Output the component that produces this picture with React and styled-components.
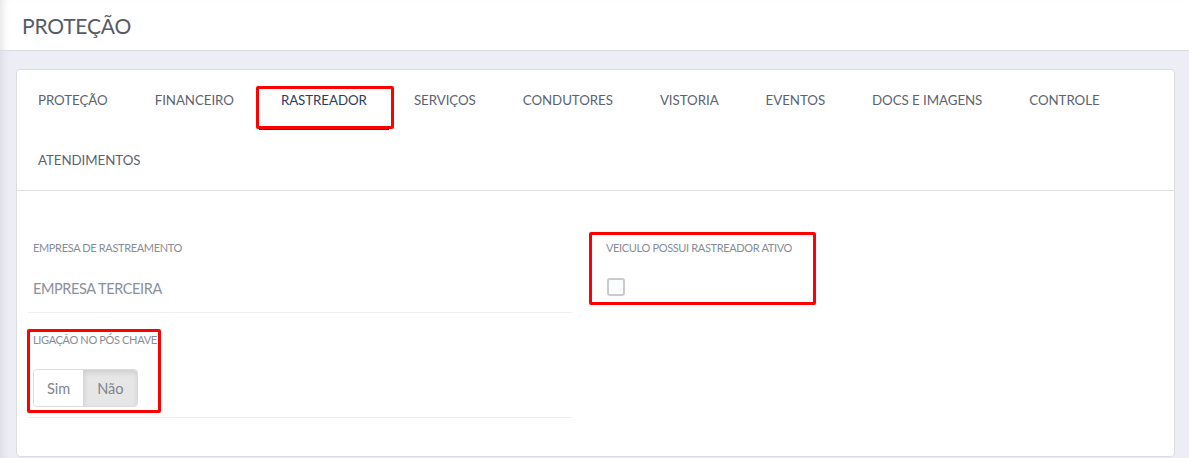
import styled, { createGlobalStyle } from "styled-components"

const GlobalStyle = createGlobalStyle`
  html, body {
    margin: 0;
    padding: 0;
    background: #ecedf5;
  }
  body {
    font-family: Lato, "Liberation Sans", sans-serif;
  }
`

const tabs = [
  "PROTEÇÃO",
  "FINANCEIRO",
  "RASTREADOR",
  "SERVIÇOS",
  "CONDUTORES",
  "VISTORIA",
  "EVENTOS",
  "DOCS E IMAGENS",
  "CONTROLE",
  "ATENDIMENTOS",
]

export default function App() {
  return (
    <>
      <GlobalStyle />
      <Page>
        <Header>
          <Title>PROTEÇÃO</Title>
        </Header>
        <Main>
          <Card>
            <TabBar>
              {tabs.map((t) => (
                <Tab key={t} active={t === "RASTREADOR"}>
                  {t}
                  {t === "RASTREADOR" && (
                    <Mark style={{ left: -3, top: 16, width: 138, height: 43 }} />
                  )}
                </Tab>
              ))}
            </TabBar>

            <Body>
              <Column>
                <Field>
                  <Label>EMPRESA DE RASTREAMENTO</Label>
                  <Value>EMPRESA TERCEIRA</Value>
                </Field>
                <Field compact>
                  <Group>
                    <Label tight>LIGAÇÃO NO PÓS CHAVE</Label>
                    <Toggle>
                      <ToggleButton>Sim</ToggleButton>
                      <ToggleButton selected>Não</ToggleButton>
                    </Toggle>
                    <Mark style={{ left: -6, top: -4, width: 134, height: 84 }} />
                  </Group>
                </Field>
              </Column>

              <Column>
                <Field plain>
                  <Group>
                    <Label>VEICULO POSSUI RASTREADOR ATIVO</Label>
                    <CheckBox />
                    <Mark style={{ left: -17, top: -9, width: 227, height: 73 }} />
                  </Group>
                </Field>
              </Column>
            </Body>
          </Card>
        </Main>
      </Page>
    </>
  )
}

const Page = styled.div`
  min-height: 458px;
  display: flex;
  flex-direction: column;
`

const Header = styled.div`
  height: 50px;
  background: #fff;
  border-bottom: 1px solid #dcdde3;
  display: flex;
  align-items: center;
  padding-left: 22px;
  box-shadow: inset 8px 0 8px -6px rgba(0, 0, 0, 0.12);
`

const Title = styled.h1`
  margin: 0;
  font-size: 21px;
  font-weight: 400;
  color: #555b66;
  letter-spacing: -0.2px;
`

const Main = styled.div`
  flex: 1;
  padding: 18px 14px 0 16px;
  box-shadow: inset 8px 0 8px -6px rgba(0, 0, 0, 0.08);
`

const Card = styled.div`
  background: #fff;
  border: 1px solid #dcdde3;
  border-radius: 4px;
`

const TabBar = styled.div`
  display: flex;
  flex-wrap: wrap;
  column-gap: 3px;
  margin-left: -1px;
  border-bottom: 1px solid #dedfe3;
`

const Tab = styled.div`
  position: relative;
  height: 60px;
  box-sizing: border-box;
  padding: 2px 22px 0;
  display: flex;
  align-items: center;
  font-size: 13.3px;
  letter-spacing: -0.05px;
  color: ${(p) => (p.active ? "#2c3c5c" : "#5b6372")};
  border-bottom: 2px solid ${(p) => (p.active ? "#1d3670" : "transparent")};
`

const Mark = styled.span`
  position: absolute;
  box-sizing: border-box;
  border: 3px solid #ff0000;
  border-radius: 2px;
  pointer-events: none;
`

const Body = styled.div`
  display: grid;
  grid-template-columns: 544px 544px;
  column-gap: 29px;
  padding: 50px 11px 38px;
`

const Column = styled.div`
  display: flex;
  flex-direction: column;
`

const Field = styled.div`
  padding: ${(p) => (p.compact ? "20px 5px 8px" : "0 5px 13px")};
  border-bottom: 1px solid ${(p) => (p.plain ? "transparent" : "#eeeef0")};
`

const Group = styled.div`
  position: relative;
  display: flex;
  flex-direction: column;
  align-items: flex-start;
`

const Label = styled.div`
  font-size: 11px;
  line-height: 14px;
  letter-spacing: -0.35px;
  color: #878d98;
  margin-bottom: ${(p) => (p.tight ? "22px" : "24px")};
`

const Value = styled.div`
  font-size: 14.5px;
  line-height: 20px;
  letter-spacing: -0.4px;
  color: #8a909a;
  margin-top: 1px;
`

const Toggle = styled.div`
  display: flex;
  border: 1px solid #dcdcdc;
  border-radius: 4px;
  overflow: hidden;
  margin-bottom: 2px;
`

const ToggleButton = styled.div`
  height: 36px;
  padding: 0 13px;
  display: flex;
  align-items: center;
  font-size: 14.5px;
  color: #80848b;
  background: ${(p) => (p.selected ? "#e6e6e6" : "#fff")};
  box-shadow: ${(p) => (p.selected ? "inset 0 3px 5px rgba(0, 0, 0, 0.1)" : "none")};
  & + & {
    border-left: 1px solid #d6d6d6;
  }
`

const CheckBox = styled.div`
  width: 18px;
  height: 18px;
  box-sizing: border-box;
  border: 2px solid #cacaca;
  border-radius: 3px;
  background: #fbfcff;
  margin: -1px 0 0 1px;
`
